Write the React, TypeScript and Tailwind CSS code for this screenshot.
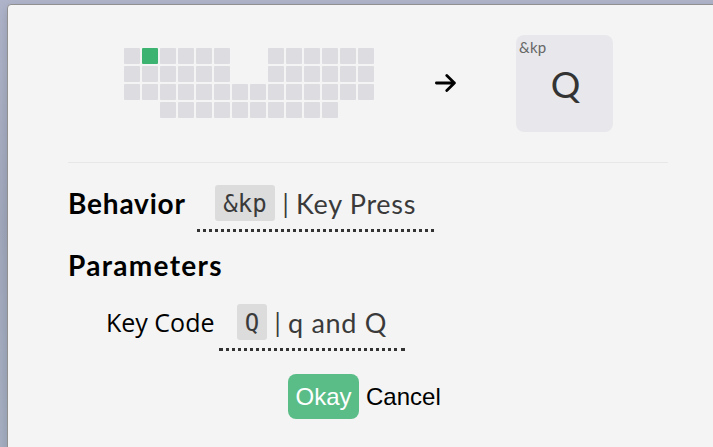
const keyRows = [
  [0, 1, 2, 3, 4, 5, 8, 9, 10, 11, 12, 13],
  [0, 1, 2, 3, 4, 5, 8, 9, 10, 11, 12, 13],
  [0, 1, 2, 3, 4, 5, 6, 7, 8, 9, 10, 11, 12, 13],
  [2, 3, 4, 5, 6, 7, 8, 9, 10, 11],
]

const columns = [...Array(14).keys()]

function KeyboardPreview() {
  return (
    <div className="grid grid-cols-[repeat(14,16px)] content-start gap-0.5 mt-[43px]">
      {keyRows.map((row, r) =>
        columns.map(c => (
          <div
            key={`${r}-${c}`}
            className={`h-4 rounded-[1px] ${
              !row.includes(c)
                ? ''
                : r === 0 && c === 1
                ? 'bg-[#3cb371]'
                : 'bg-[#dddde1]'
            }`}
          />
        ))
      )}
    </div>
  )
}

function ValueLink({ code, label, className, codeClass }: any) {
  return (
    <div className={`flex h-[47px] border-b-3 border-dotted border-[#333] pl-[18px] text-[#3a3a3a] ${className}`}>
      <code className={`h-9 rounded-[3px] bg-[#dcdcdc] text-center font-['DejaVu_Sans_Mono',monospace] text-[24px] leading-[39px] ${codeClass}`}>
        {code}
      </code>
      <span className="w-[21px] text-center font-['Open_Sans',sans-serif] text-[25px] leading-[34px]">|</span>
      <span className="whitespace-nowrap text-[27px] leading-[37px] tracking-[0.7px]">{label}</span>
    </div>
  )
}

export default function App() {
  return (
    <div className="h-[447px] w-[713px] overflow-hidden bg-linear-to-b from-[#b0b5cb] via-[#a2a9bd] to-[#a7b1c3] pl-[7px] pt-1 font-[Lato,sans-serif]">
      <div className="h-[460px] w-[720px] rounded-tl-[4px] border border-[#909090] bg-[#f4f4f4] shadow-[0_4px_12px_rgba(80,85,100,0.3)]">
        {/* Selected key and its binding */}
        <div className="flex h-[157px] pl-[116px]">
          <KeyboardPreview />
          <svg className="ml-[60px] mt-[68px] h-5 w-[22px]" viewBox="0 0 22 20" fill="none" stroke="#000" strokeWidth="2.8" strokeLinecap="round" strokeLinejoin="round">
            <path d="M2.4 10H20.4M12.8 2.6L20.4 10L12.8 17.4" />
          </svg>
          <div className="relative ml-[60px] mt-[30px] flex h-[97px] w-[97px] items-center justify-center rounded-[8px] bg-[#e8e8ec] text-[#333]">
            <span className="absolute left-[3px] top-[3px] text-[15px] leading-[18px] tracking-[0.2px] text-[#666]">&amp;kp</span>
            <span className="pl-0.5 text-[37px]">Q</span>
          </div>
        </div>
        <div className="ml-[60px] w-[600px] border-t border-[#e7e7e7]" />

        <div className="ml-[60px] mt-[22px] flex">
          <h2 className="w-[129px] text-[28px] font-bold leading-[36px] tracking-[0.8px]">Behavior</h2>
          <ValueLink code="&kp" label="Key Press" className="w-[237px]" codeClass="w-[60px]" />
        </div>
        <h2 className="ml-[60px] mt-[14px] text-[28px] font-bold leading-[38px] tracking-[1.3px]">Parameters</h2>
        <div className="ml-[97px] mt-5 flex">
          <label className="w-[114px] pl-px font-['Open_Sans',sans-serif] text-[25px] leading-[37px]">Key Code</label>
          <ValueLink code="Q" label="q and Q" className="w-[186px]" codeClass="w-[30px]" />
        </div>

        <div className="ml-[280px] mt-[23px] flex font-['Liberation_Sans',sans-serif] text-[24px]">
          <button className="h-[45px] w-[71px] rounded-[8px] bg-[#5abd87] text-white">Okay</button>
          <button className="ml-[7px]">Cancel</button>
        </div>
      </div>
    </div>
  )
}
